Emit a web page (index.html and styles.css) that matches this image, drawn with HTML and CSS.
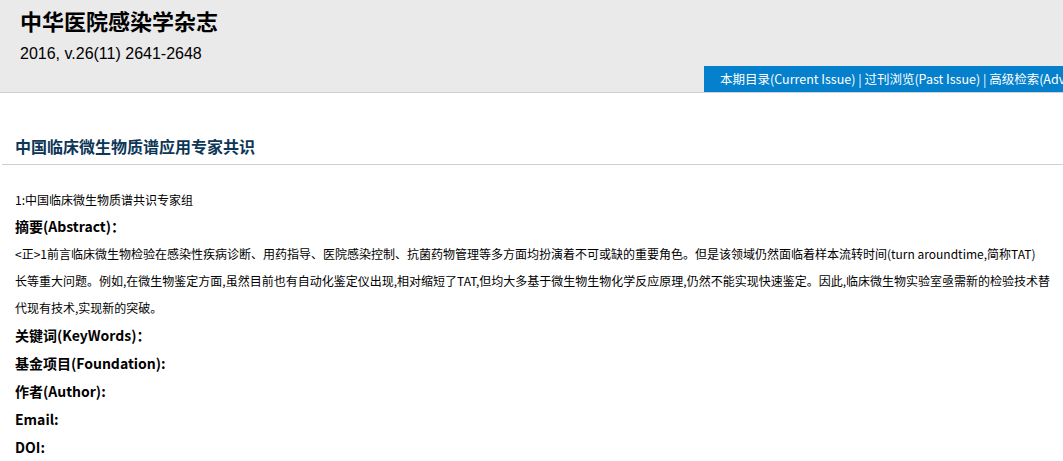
FILE: index.html
```html
<!DOCTYPE html>
<html lang="zh-CN">
<head>
    <meta charset="UTF-8">
    <meta name="viewport" content="width=device-width, initial-scale=1.0">
    <title>中国临床微生物质谱应用专家共识 | 中华医院感染学杂志</title>
    <link rel="stylesheet" href="styles.css">
</head>
<body>
    <header class="journal-header">
        <h1 class="journal-name">中华医院感染学杂志</h1>
        <p class="journal-issue">2016, v.26(11) 2641-2648</p>
        <nav class="journal-nav">
            <a href="#">本期目录(Current Issue)</a> | <a href="#">过刊浏览(Past Issue)</a> | <a href="#">高级检索(Adva</a>
        </nav>
    </header>

    <div class="article">
        <h2 class="article-title">中国临床微生物质谱应用专家共识</h2>

        <div class="article-body">
            <p class="authors">1:中国临床微生物质谱共识专家组</p>
            <p class="label">摘要(Abstract)：</p>
            <p class="abstract">&lt;正&gt;1前言临床微生物检验在感染性疾病诊断、用药指导、医院感染控制、抗菌药物管理等多方面均扮演着不可或缺的重要角色。但是该领域仍然面临着样本流转时间(turn aroundtime,简称TAT)<br>长等重大问题。例如,在微生物鉴定方面,虽然目前也有自动化鉴定仪出现,相对缩短了TAT,但均大多基于微生物生物化学反应原理,仍然不能实现快速鉴定。因此,临床微生物实验室亟需新的检验技术替代现有技术,实现新的突破。</p>
            <p class="label">关键词(KeyWords)：</p>
            <p class="label">基金项目(Foundation):</p>
            <p class="label">作者(Author):</p>
            <p class="label">Email:</p>
            <p class="label">DOI:</p>
        </div>
    </div>
</body>
</html>
```

FILE: styles.css
```css
:root {
    --header-bg: #eaeaea;
    --nav-blue: #0480cc;
    --title-color: #0d3657;
    --text-color: #000000;
    --line-color: #d0d0d0;
}

body {
    font-family: "Noto Sans CJK SC", "Noto Sans", sans-serif;
    margin: 0;
    padding: 0;
    color: var(--text-color);
    background-color: #fff;
    overflow: hidden;
}

.journal-header {
    background-color: var(--header-bg);
    height: 92px;
    border-bottom: 1px solid #cfcfcf;
    display: flex;
    flex-direction: column;
    overflow: hidden;
}

.journal-name {
    font-size: 22px;
    font-weight: bold;
    margin: 0;
    padding: 4px 0 0 20px;
    line-height: 32px;
}

.journal-issue {
    font-family: "Liberation Sans", Arial, sans-serif;
    font-size: 16px;
    margin: 0;
    padding: 8px 0 0 20px;
    line-height: 20px;
}

.journal-nav {
    margin-top: auto;
    align-self: flex-end;
    width: 343px;
    height: 26px;
    line-height: 26px;
    padding-left: 16px;
    background-color: var(--nav-blue);
    color: #fff;
    font-size: 12.5px;
    white-space: nowrap;
    overflow: hidden;
}

.journal-nav a {
    color: #fff;
    text-decoration: none;
}

.article {
    padding-top: 40px;
}

.article-title {
    font-size: 16px;
    font-weight: bold;
    color: var(--title-color);
    margin: 0 0 0 2px;
    padding: 0 0 5px 13px;
    line-height: 26px;
    border-bottom: 1px solid var(--line-color);
}

.article-body {
    padding: 23px 10px 0 15px;
}

.article-body p {
    margin: 0;
}

.authors {
    font-size: 12px;
    line-height: 24px;
}

.label {
    font-size: 14px;
    font-weight: bold;
    line-height: 28px;
}

.abstract {
    font-size: 12px;
    line-height: 27px;
}
```
